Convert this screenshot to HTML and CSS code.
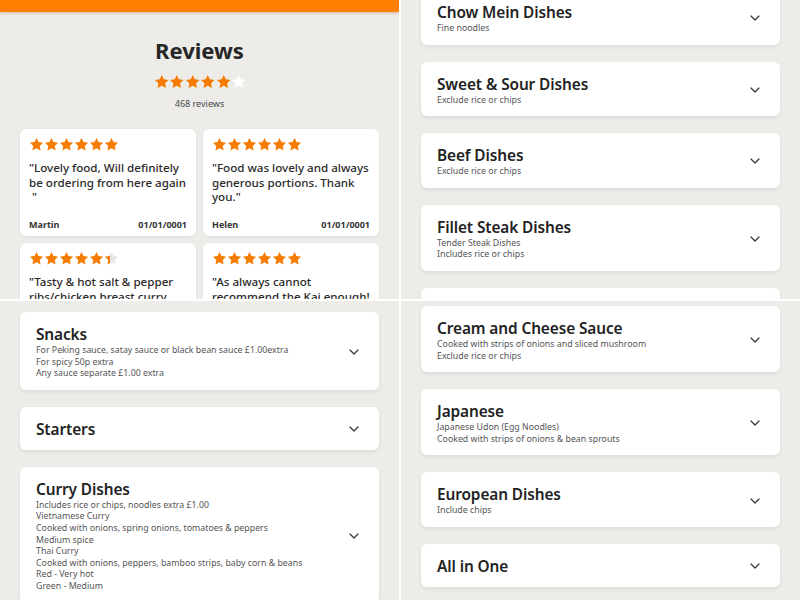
FILE: index.html
```html
<!DOCTYPE html>
<html>
<head>
<meta charset="utf-8">
<link rel="stylesheet" href="styles.css">
</head>
<body>
<svg width="0" height="0" class="defs">
  <defs>
    <symbol id="star" viewBox="0 0 24 24"><polygon points="12,1.5 15.2,8.1 22.5,9.1 17.2,14.2 18.5,21.5 12,18 5.5,21.5 6.8,14.2 1.5,9.1 8.8,8.1"/></symbol>
    <symbol id="chev" viewBox="0 0 10 6"><polyline points="1,1 5,5 9,1" fill="none" stroke="#333" stroke-width="1.2" stroke-linecap="round" stroke-linejoin="round"/></symbol>
    <linearGradient id="part" x1="0" x2="1" y1="0" y2="0">
      <stop offset="0.42" stop-color="#f57c00"/>
      <stop offset="0.42" stop-color="#e6e6e6"/>
    </linearGradient>
  </defs>
</svg>
<div class="grid">
  <section class="tile tile-reviews">
    <div class="topbar"></div>
    <h1 class="rev-title">Reviews</h1>
    <div class="stars stars-main">
      <svg class="s"><use href="#star"/></svg><svg class="s"><use href="#star"/></svg><svg class="s"><use href="#star"/></svg><svg class="s"><use href="#star"/></svg><svg class="s"><use href="#star"/></svg><svg class="s s-white"><use href="#star"/></svg>
    </div>
    <p class="rev-count">468 reviews</p>
    <div class="rev-grid">
      <div class="rcard">
        <div class="stars"><svg class="s"><use href="#star"/></svg><svg class="s"><use href="#star"/></svg><svg class="s"><use href="#star"/></svg><svg class="s"><use href="#star"/></svg><svg class="s"><use href="#star"/></svg><svg class="s"><use href="#star"/></svg></div>
        <p class="quote">"Lovely food, Will definitely<br>be ordering from here again<br>&nbsp;"</p>
        <div class="rfoot"><span>Martin</span><span>01/01/0001</span></div>
      </div>
      <div class="rcard">
        <div class="stars"><svg class="s"><use href="#star"/></svg><svg class="s"><use href="#star"/></svg><svg class="s"><use href="#star"/></svg><svg class="s"><use href="#star"/></svg><svg class="s"><use href="#star"/></svg><svg class="s"><use href="#star"/></svg></div>
        <p class="quote">"Food was lovely and always<br>generous portions. Thank<br>you."</p>
        <div class="rfoot"><span>Helen</span><span>01/01/0001</span></div>
      </div>
      <div class="rcard">
        <div class="stars"><svg class="s"><use href="#star"/></svg><svg class="s"><use href="#star"/></svg><svg class="s"><use href="#star"/></svg><svg class="s"><use href="#star"/></svg><svg class="s"><use href="#star"/></svg><svg class="s s-part"><use href="#star"/></svg></div>
        <p class="quote">"Tasty &amp; hot salt &amp; pepper<br>ribs/chicken breast curry<br>was great."</p>
        <div class="rfoot"><span>Sam</span><span>01/01/0001</span></div>
      </div>
      <div class="rcard">
        <div class="stars"><svg class="s"><use href="#star"/></svg><svg class="s"><use href="#star"/></svg><svg class="s"><use href="#star"/></svg><svg class="s"><use href="#star"/></svg><svg class="s"><use href="#star"/></svg><svg class="s"><use href="#star"/></svg></div>
        <p class="quote">"As always cannot<br>recommend the Kai enough!<br>"</p>
        <div class="rfoot"><span>Lee</span><span>01/01/0001</span></div>
      </div>
    </div>
  </section>

  <section class="tile">
    <div class="list list-tr">
      <div class="mcard"><div class="mtext"><h2>Chow Mein Dishes</h2><p>Fine noodles</p></div><svg class="chev"><use href="#chev"/></svg></div>
      <div class="mcard"><div class="mtext"><h2>Sweet &amp; Sour Dishes</h2><p>Exclude rice or chips</p></div><svg class="chev"><use href="#chev"/></svg></div>
      <div class="mcard"><div class="mtext"><h2>Beef Dishes</h2><p>Exclude rice or chips</p></div><svg class="chev"><use href="#chev"/></svg></div>
      <div class="mcard"><div class="mtext"><h2>Fillet Steak Dishes</h2><p>Tender Steak Dishes<br>Includes rice or chips</p></div><svg class="chev"><use href="#chev"/></svg></div>
      <div class="mcard"><div class="mtext"><h2>Chicken Dishes</h2><p>Exclude rice or chips</p></div><svg class="chev"><use href="#chev"/></svg></div>
    </div>
  </section>

  <section class="tile">
    <div class="list list-bl">
      <div class="mcard"><div class="mtext"><h2>Snacks</h2><p>For Peking sauce, satay sauce or black bean sauce £1.00extra<br>For spicy 50p extra<br>Any sauce separate £1.00 extra</p></div><svg class="chev"><use href="#chev"/></svg></div>
      <div class="mcard"><div class="mtext"><h2>Starters</h2></div><svg class="chev"><use href="#chev"/></svg></div>
      <div class="mcard"><div class="mtext"><h2>Curry Dishes</h2><p>Includes rice or chips, noodles extra £1.00<br>Vietnamese Curry<br>Cooked with onions, spring onions, tomatoes &amp; peppers<br>Medium spice<br>Thai Curry<br>Cooked with onions, peppers, bamboo strips, baby corn &amp; beans<br>Red - Very hot<br>Green - Medium</p></div><svg class="chev"><use href="#chev"/></svg></div>
    </div>
  </section>

  <section class="tile">
    <div class="list list-br">
      <div class="mcard"><div class="mtext"><h2>Cream and Cheese Sauce</h2><p>Cooked with strips of onions and sliced mushroom<br>Exclude rice or chips</p></div><svg class="chev"><use href="#chev"/></svg></div>
      <div class="mcard"><div class="mtext"><h2>Japanese</h2><p>Japanese Udon (Egg Noodles)<br>Cooked with strips of onions &amp; bean sprouts</p></div><svg class="chev"><use href="#chev"/></svg></div>
      <div class="mcard"><div class="mtext"><h2>European Dishes</h2><p>Include chips</p></div><svg class="chev"><use href="#chev"/></svg></div>
      <div class="mcard"><div class="mtext"><h2>All in One</h2></div><svg class="chev"><use href="#chev"/></svg></div>
    </div>
  </section>
</div>
</body>
</html>
```

FILE: styles.css
```css
* { box-sizing: border-box; }
html, body { margin: 0; padding: 0; }
body {
  width: 800px;
  height: 600px;
  overflow: hidden;
  background: #ffffff;
  font-family: "Noto Sans", "Open Sans", sans-serif;
  color: #262626;
}
.defs { position: absolute; width: 0; height: 0; }
.grid {
  display: grid;
  grid-template-columns: 399px 399px;
  grid-template-rows: 299px 299px;
  gap: 2px;
  width: 800px;
  height: 600px;
}
.tile {
  background: #edece9;
  overflow: hidden;
  padding: 0 20px;
}

/* Reviews tile */
.tile-reviews { padding: 0; }
.topbar {
  height: 12px;
  background: #ff8000;
  box-shadow: 0 1px 3px rgba(160, 80, 0, 0.35);
}
.rev-title {
  margin: 24px 0 0;
  font-size: 22px;
  line-height: 28px;
  font-weight: 700;
  text-align: center;
  color: #262626;
}
.stars { display: flex; height: 15px; }
.stars-main { justify-content: center; margin-top: 10px; padding-left: 1px; }
.s { width: 15px; height: 15px; fill: #f57c00; flex: none; }
.stars-main .s { width: 15.5px; height: 15.5px; }
.s-white { fill: #ffffff; }
.s-part { fill: url(#part); }
.rev-count {
  margin: 8px 0 0;
  font-size: 9px;
  line-height: 13px;
  text-align: center;
  color: #4a4a4a;
}
.rev-grid {
  display: grid;
  grid-template-columns: 176px 176px;
  gap: 7px;
  margin: 19px 20px 0;
}
.rcard {
  background: #ffffff;
  border-radius: 6px;
  padding: 8px 9px 5px;
  display: flex;
  flex-direction: column;
  box-shadow: 0 1px 3px rgba(0, 0, 0, 0.07);
}
.quote {
  margin: 9px 0 0;
  font-size: 11.6px;
  line-height: 14.7px;
  font-weight: 500;
  white-space: nowrap;
  color: #2a2a2a;
}
.rfoot {
  margin-top: 14px;
  display: flex;
  justify-content: space-between;
  font-size: 9px;
  line-height: 12px;
  font-weight: 700;
  color: #333;
}

/* Menu tiles */
.list { display: flex; flex-direction: column; gap: 17px; }
.list-tr { margin-top: -10px; }
.list-bl { margin-top: 11px; }
.list-br { margin-top: 5px; }
.mcard {
  background: #ffffff;
  border-radius: 6px;
  padding: 12px 20px 10px 16px;
  display: flex;
  align-items: center;
  justify-content: space-between;
  box-shadow: 0 2px 4px rgba(0, 0, 0, 0.07);
}
.mtext h2 {
  margin: 0;
  font-size: 15.4px;
  line-height: 21px;
  font-weight: 600;
  letter-spacing: -0.1px;
  color: #222;
}
.mtext p {
  margin: 0;
  font-size: 8.8px;
  line-height: 11.6px;
  color: #555;
}
.chev { width: 10px; height: 6px; flex: none; }
```
